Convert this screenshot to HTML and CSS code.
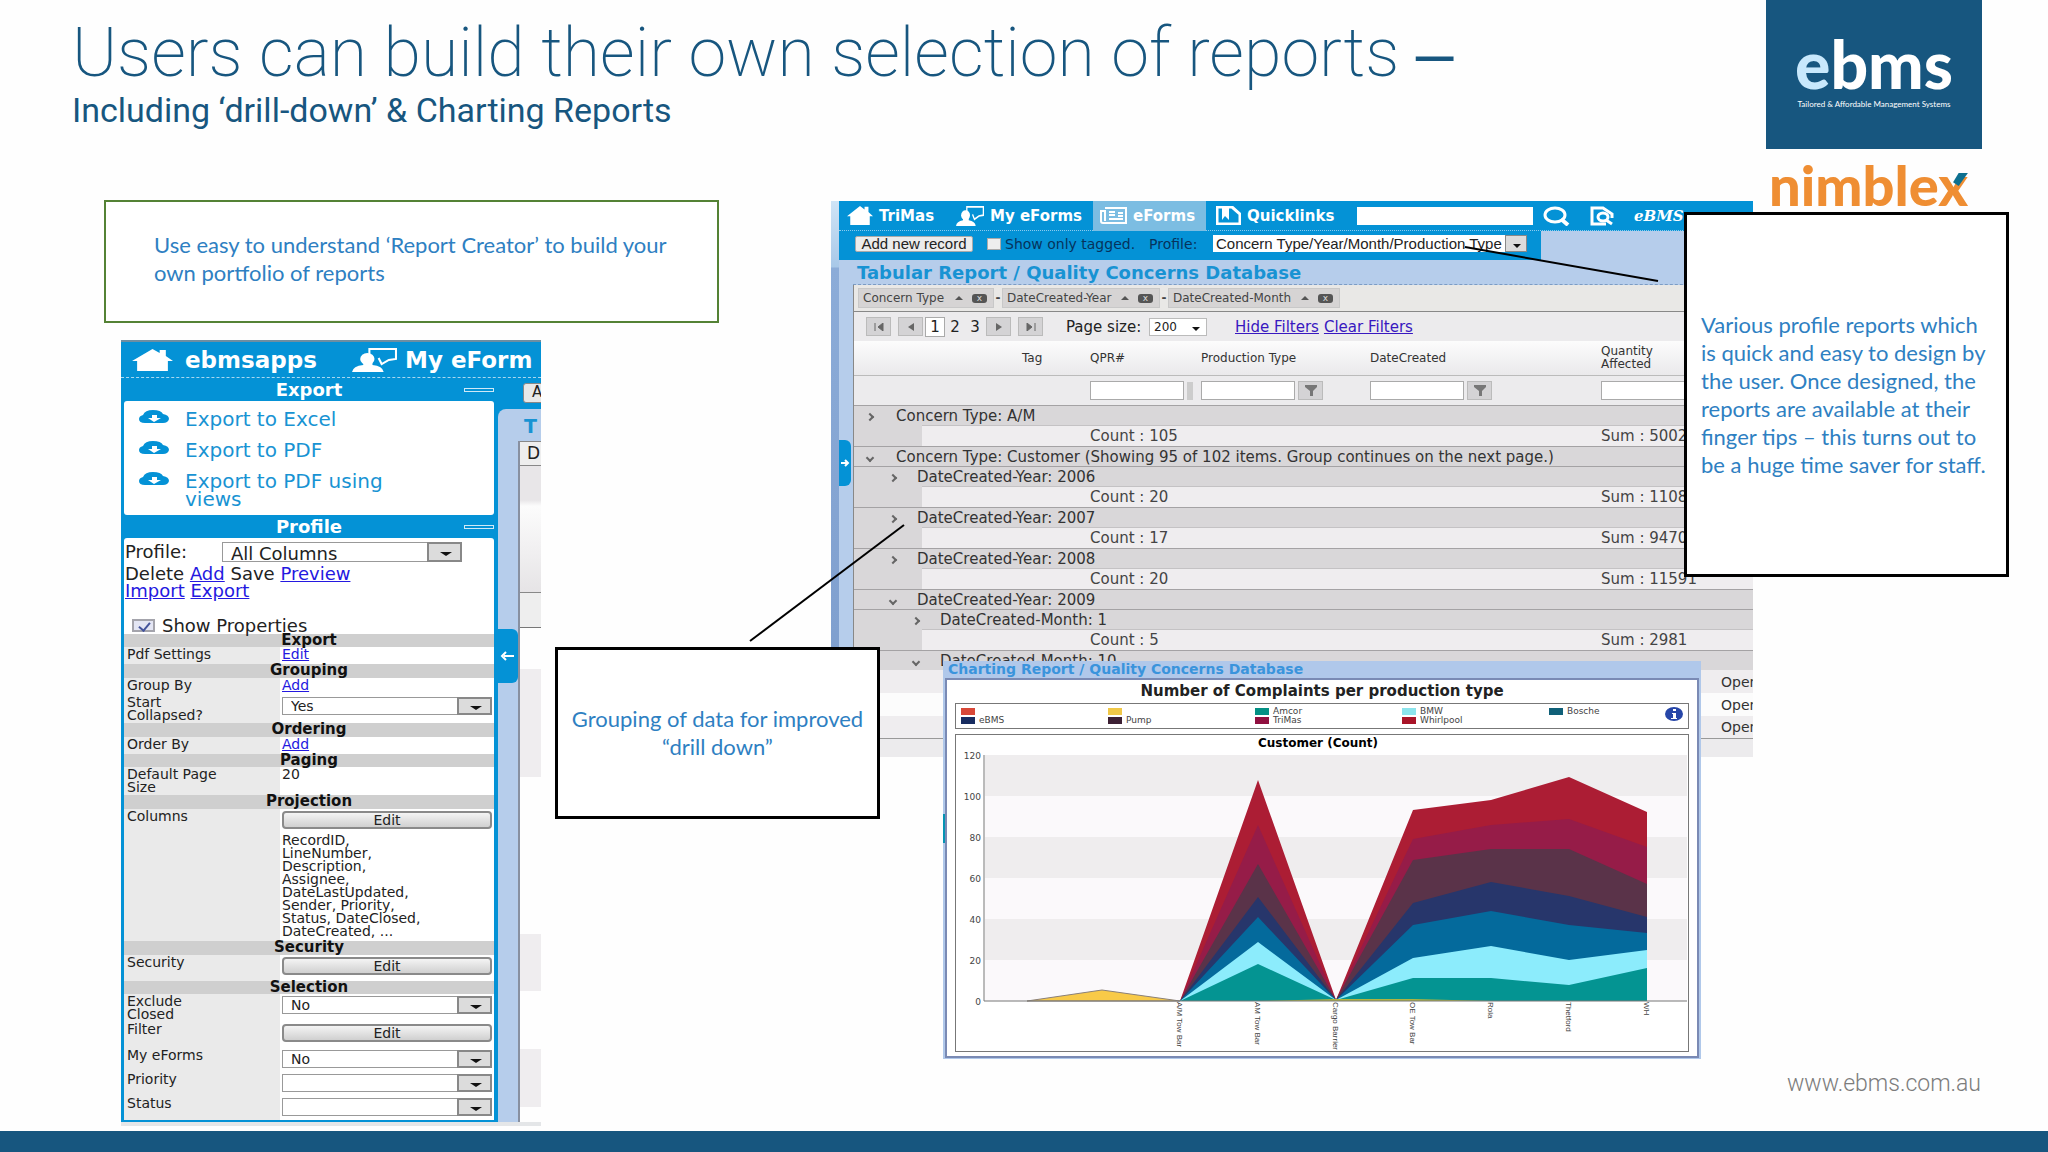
FILE: index.html
```html
<!DOCTYPE html>
<html lang="en">
<head>
    <meta charset="UTF-8">
    <meta name="viewport" content="width=device-width, initial-scale=1.0">
    <title>ebms - Report selection</title>
    <link rel="stylesheet" href="styles.css">
</head>
<body>
    <!-- shared icons -->
    <svg class="defs" width="0" height="0">
        <symbol id="home" viewBox="0 0 40 22" preserveAspectRatio="none">
            <path d="M20 0 L27 4 V1 H33 V7 L40 12 H35 V22 H5 V12 H0 Z" fill="#fff"/>
        </symbol>
        <symbol id="user" viewBox="0 0 44 24" preserveAspectRatio="none">
            <path d="M17 6 V1 H43 V11 L36 12 L29 16 L26 10" fill="none" stroke="#fff" stroke-width="2"/>
            <ellipse cx="15" cy="11" rx="7" ry="6" fill="#fff"/>
            <path d="M0 24 Q1 18 11 17 V14 H20 V17 Q30 18 31 24 Z" fill="#fff"/>
        </symbol>
        <symbol id="cloud" viewBox="0 0 30 13" preserveAspectRatio="none">
            <path d="M6 13 Q0 13 0 9 Q0 6 4 5 Q6 0 14 0 Q22 0 24 4 Q30 5 30 9 Q29 13 24 13 Z" fill="#0492d6"/>
            <path d="M13 5 H18 V8 H22 L15 12 L9 8 H13 Z" fill="#fff"/>
        </symbol>
        <symbol id="funnel" viewBox="0 0 12 11">
            <path d="M0 0 H12 V2 L8 6 V11 H5 V6 L0 2 Z" fill="#777"/>
        </symbol>
    </svg>

    <header class="slide-header">
        <div>
            <h1>Users can build their own selection of reports <span class="dash">–</span></h1>
            <p class="subtitle">Including ‘drill-down’ &amp; Charting Reports</p>
        </div>
        <div class="brand">
            <div class="ebms">
                <div class="ebms-name"><span>e</span>bms</div>
                <div class="ebms-tag">Tailored &amp; Affordable Management Systems</div>
            </div>
            <div class="nimblex">nimblex
                <svg width="15" height="13" viewBox="0 0 16 14"><path d="M6 0 H16 L6 14 L0 10 Z" fill="#0d7090"/></svg>
            </div>
        </div>
    </header>

    <main class="canvas">
        <div class="note note-creator">
            <p>Use easy to understand ‘Report Creator’ to build your own portfolio of reports</p>
        </div>

        <!-- report creator -->
        <section class="window creator">
            <nav class="creator-nav">
                <svg width="41" height="22"><use href="#home"/></svg>
                <a href="#">ebmsapps</a>
                <svg width="45" height="24"><use href="#user"/></svg>
                <a href="#">My eForm</a>
            </nav>
            <div class="creator-body">
                <div class="sidebar">
                    <h2>Export <i class="collapse"></i></h2>
                    <ul class="card exports">
                        <li><svg width="30" height="13"><use href="#cloud"/></svg><a href="#">Export to Excel</a></li>
                        <li><svg width="30" height="13"><use href="#cloud"/></svg><a href="#">Export to PDF</a></li>
                        <li><svg width="30" height="13"><use href="#cloud"/></svg><a href="#">Export to PDF using<br>views</a></li>
                    </ul>
                    <h2>Profile <i class="collapse"></i></h2>
                    <div class="card">
                        <div class="profile-row">
                            <label for="profile">Profile:</label>
                            <span class="pick"><select id="profile"><option>All Columns</option></select></span>
                        </div>
                        <div class="actions">Delete <a href="#">Add</a> Save <a href="#">Preview</a><br><a href="#">Import</a> <a href="#">Export</a></div>
                        <label class="show-props"><input type="checkbox" checked> Show Properties</label>
                        <table class="props">
                            <colgroup><col class="p-label"><col></colgroup>
                            <tr class="r13"><th colspan="2">Export</th></tr>
                            <tr class="r17"><td>Pdf Settings</td><td><a href="#">Edit</a></td></tr>
                            <tr class="r14"><th colspan="2">Grouping</th></tr>
                            <tr class="r17"><td>Group By</td><td><a href="#">Add</a></td></tr>
                            <tr class="r28"><td>Start<br>Collapsed?</td><td><span class="pick"><select aria-label="Start Collapsed?"><option>Yes</option></select></span></td></tr>
                            <tr class="r14"><th colspan="2">Ordering</th></tr>
                            <tr class="r17"><td>Order By</td><td><a href="#">Add</a></td></tr>
                            <tr class="r13"><th colspan="2">Paging</th></tr>
                            <tr class="r28"><td>Default Page<br>Size</td><td>20</td></tr>
                            <tr class="r14"><th colspan="2">Projection</th></tr>
                            <tr class="r132"><td>Columns</td><td><button>Edit</button>RecordID,<br>LineNumber,<br>Description,<br>Assignee,<br>DateLastUpdated,<br>Sender, Priority,<br>Status, DateClosed,<br>DateCreated, ...</td></tr>
                            <tr class="r14"><th colspan="2">Security</th></tr>
                            <tr class="r26"><td>Security</td><td><button>Edit</button></td></tr>
                            <tr class="r13"><th colspan="2">Selection</th></tr>
                            <tr class="r28"><td>Exclude<br>Closed</td><td><span class="pick"><select aria-label="Exclude Closed"><option>No</option></select></span></td></tr>
                            <tr class="r26"><td>Filter</td><td><button>Edit</button></td></tr>
                            <tr class="r24"><td>My eForms</td><td><span class="pick"><select aria-label="My eForms"><option>No</option></select></span></td></tr>
                            <tr class="r24"><td>Priority</td><td><span class="pick"><select aria-label="Priority"><option></option></select></span></td></tr>
                            <tr class="r24"><td>Status</td><td><span class="pick"><select aria-label="Status"><option></option></select></span></td></tr>
                        </table>
                    </div>
                </div>
                <div class="behind">
                    <div class="behind-bar"><button>A</button></div>
                    <div class="behind-page">
                        <div class="behind-title">T</div>
                        <div class="behind-grid">
                            <div class="behind-head">D</div>
                            <div class="behind-filter"></div>
                            <div class="behind-row"></div>
                            <div class="behind-list"></div>
                        </div>
                    </div>
                </div>
            </div>
            <div class="handle">
                <svg width="14" height="10" viewBox="0 0 14 10"><path d="M14 5 H4 M6 1 L2 5 L6 9" fill="none" stroke="#fff" stroke-width="2"/></svg>
            </div>
        </section>

        <!-- tabular report -->
        <section class="window tabular">
            <div class="edge"></div>
            <div class="tab-main">
                <nav class="tab-nav">
                    <a class="n-home" href="#"><svg width="26" height="19"><use href="#home"/></svg>TriMas</a>
                    <a class="n-forms" href="#"><svg width="28" height="20"><use href="#user"/></svg>My eForms</a>
                    <a class="n-active" href="#"><svg width="27" height="17" viewBox="0 0 27 17"><path d="M5 1 H26 V16 H3 Q1 16 1 14 V4 H5 V14" fill="none" stroke="#fff" stroke-width="2"/><path d="M9 5 H15 M9 8 H15 M9 12 H23 M18 6 H23 M18 9 H23" stroke="#fff" stroke-width="2"/></svg>eForms</a>
                    <a class="n-quick" href="#"><svg width="25" height="19" viewBox="0 0 25 19"><path d="M1 1 H16 L24 8 V18 H1 Z" fill="none" stroke="#fff" stroke-width="3"/><path d="M6 2 H13 V14 L9 10 L6 14 Z" fill="#fff"/></svg>Quicklinks</a>
                    <input type="text" aria-label="Search">
                    <svg class="n-search" width="27" height="20" viewBox="0 0 27 20"><ellipse cx="12" cy="9" rx="10" ry="7" fill="none" stroke="#fff" stroke-width="3"/><path d="M18 13 L25 19" stroke="#fff" stroke-width="4"/></svg>
                    <svg class="n-doc" width="24" height="20" viewBox="0 0 24 20"><path d="M16 18 H2 V2 H13 L22 8 V12" fill="none" stroke="#fff" stroke-width="3"/><ellipse cx="13" cy="11" rx="5" ry="4" fill="none" stroke="#fff" stroke-width="3"/><path d="M16 14 L22 18" stroke="#fff" stroke-width="3"/></svg>
                    <span class="n-brand">eBMS v</span>
                </nav>
                <div class="toolbar">
                    <button>Add new record</button>
                    <label class="tagged"><input type="checkbox"> Show only tagged.</label>
                    <label class="tagged" for="tabProfile">Profile:</label>
                    <span class="pick"><select id="tabProfile"><option>Concern Type/Year/Month/Production Type</option></select></span>
                </div>
                <div class="tab-page">
                    <h2>Tabular Report / Quality Concerns Database</h2>
                    <div class="grid">
                        <div class="chips">
                            <span class="chip chip-a">Concern Type <i class="up"></i><i class="x">x</i></span><b>-</b>
                            <span class="chip chip-b">DateCreated-Year <i class="up"></i><i class="x">x</i></span><b>-</b>
                            <span class="chip chip-c">DateCreated-Month <i class="up"></i><i class="x">x</i></span>
                        </div>
                        <div class="pager">
                            <button aria-label="First"><svg width="10" height="8"><path d="M1 0 V8 M9 0 L4 4 L9 8 Z" fill="#666" stroke="#666"/></svg></button>
                            <button class="prev" aria-label="Previous"><svg width="10" height="8"><path d="M8 0 L2 4 L8 8 Z" fill="#666"/></svg></button>
                            <span class="page current">1</span><span class="page">2</span><span class="page">3</span>
                            <button aria-label="Next"><svg width="10" height="8"><path d="M2 0 L8 4 L2 8 Z" fill="#666"/></svg></button>
                            <button aria-label="Last"><svg width="10" height="8"><path d="M9 0 V8 M1 0 L6 4 L1 8 Z" fill="#666" stroke="#666"/></svg></button>
                            <label for="pageSize">Page size:</label>
                            <span class="pick"><select id="pageSize"><option>200</option></select></span>
                            <a href="#">Hide Filters</a>
                            <a class="clear" href="#">Clear Filters</a>
                        </div>
                        <table class="records">
                            <colgroup><col class="c-in"><col class="c-tag"><col class="c-qpr"><col class="c-prod"><col class="c-date"><col class="c-qty"><col></colgroup>
                            <tr class="heads"><th></th><th class="tag">Tag</th><th>QPR#</th><th>Production Type</th><th>DateCreated</th><th>Quantity<br>Affected</th><th></th></tr>
                            <tr class="filters">
                                <td></td><td></td>
                                <td><input type="text" aria-label="QPR#"><i class="stub"></i></td>
                                <td><input type="text" aria-label="Production Type"><button aria-label="Filter"><svg width="12" height="11"><use href="#funnel"/></svg></button></td>
                                <td><input type="text" aria-label="DateCreated"><button aria-label="Filter"><svg width="12" height="11"><use href="#funnel"/></svg></button></td>
                                <td><input type="text" aria-label="Quantity"></td><td></td>
                            </tr>
                            <tr class="group l1"><td colspan="7"><i class="shut"></i>Concern Type: A/M</td></tr>
                            <tr class="count"><td></td><td></td><td colspan="3">Count : 105</td><td colspan="2">Sum : 5002</td></tr>
                            <tr class="group l1"><td colspan="7"><i class="open"></i>Concern Type: Customer (Showing 95 of 102 items. Group continues on the next page.)</td></tr>
                            <tr class="group l2"><td colspan="7"><i class="shut"></i>DateCreated-Year: 2006</td></tr>
                            <tr class="count"><td></td><td></td><td colspan="3">Count : 20</td><td colspan="2">Sum : 1108</td></tr>
                            <tr class="group l2"><td colspan="7"><i class="shut"></i>DateCreated-Year: 2007</td></tr>
                            <tr class="count"><td></td><td></td><td colspan="3">Count : 17</td><td colspan="2">Sum : 9470</td></tr>
                            <tr class="group l2"><td colspan="7"><i class="shut"></i>DateCreated-Year: 2008</td></tr>
                            <tr class="count"><td></td><td></td><td colspan="3">Count : 20</td><td colspan="2">Sum : 11591</td></tr>
                            <tr class="group l2"><td colspan="7"><i class="open"></i>DateCreated-Year: 2009</td></tr>
                            <tr class="group l3"><td colspan="7"><i class="shut"></i>DateCreated-Month: 1</td></tr>
                            <tr class="count"><td></td><td></td><td colspan="3">Count : 5</td><td colspan="2">Sum : 2981</td></tr>
                            <tr class="group l3"><td colspan="7"><i class="open"></i>DateCreated-Month: 10</td></tr>
                            <tr class="item"><td></td><td colspan="5"></td><td>Open</td></tr>
                            <tr class="item alt"><td></td><td colspan="5"></td><td>Open</td></tr>
                            <tr class="item last"><td></td><td colspan="5"></td><td>Open</td></tr>
                        </table>
                    </div>
                </div>
            </div>
            <div class="handle">
                <svg width="9" height="8" viewBox="0 0 9 8"><path d="M0 4 H6 M4 1 L7 4 L4 7" fill="none" stroke="#fff" stroke-width="2"/></svg>
            </div>
        </section>

        <!-- charting report -->
        <section class="window charting">
            <h2>Charting Report / Quality Concerns Database</h2>
            <div class="chart-page">
                <h3>Number of Complaints per production type</h3>
                <div class="legend">
                    <ul>
                        <li class="k-coral"></li><li class="k-yellow"></li><li class="k-teal">Amcor</li><li class="k-cyan">BMW</li><li class="k-blue">Bosche</li>
                        <li class="k-navy">eBMS</li><li class="k-plum">Pump</li><li class="k-crimson">TriMas</li><li class="k-red">Whirlpool</li>
                    </ul>
                    <svg width="18" height="14" viewBox="0 0 18 14"><ellipse cx="9" cy="7" rx="9" ry="7" fill="#2746a8"/><path d="M8 2 H11 V4 H8 Z M7 6 H11 V11 H12 V12 H6 V11 H8 V7 H7 Z" fill="#fff"/></svg>
                </div>
                <div class="plot">
                    <svg viewBox="0 0 732 316">
                        <text class="plot-title" x="362" y="12">Customer (Count)</text>
                        <path d="M29 20 H731 V61 H29 Z M29 102 H731 V143 H29 Z M29 184 H731 V225 H29 Z" fill="#efedee"/>
                        <path d="M29 61 H731 V102 H29 Z M29 143 H731 V184 H29 Z M29 225 H731 V266 H29 Z" fill="#fbf9fb"/>
                        <path d="M71 266 L146 255 L224 266 Z" fill="#f8ca48" stroke="#8a8078"/>
                        <path d="M224 266 L302 45 L380 265 L457 75 L535 65 L613 42 L691 77 V266 Z" fill="#ac1d34"/>
                        <path d="M224 266 L302 90 L380 265 L457 104 L535 90 L613 84 L691 112 V266 Z" fill="#961c48"/>
                        <path d="M224 266 L302 129 L380 265 L457 125 L535 114 L613 114 L691 149 V266 Z" fill="#5a3349"/>
                        <path d="M224 266 L302 162 L380 265 L457 168 L535 147 L613 161 L691 182 V266 Z" fill="#27366b"/>
                        <path d="M224 266 L302 182 L380 265 L457 190 L535 176 L613 190 L691 198 V266 Z" fill="#046a9c"/>
                        <path d="M224 266 L302 207 L380 265 L457 223 L535 211 L613 225 L691 215 V266 Z" fill="#8cecfc"/>
                        <path d="M224 266 L302 229 L380 265 L457 243 L535 243 L613 250 L691 233 V266 Z" fill="#049492"/>
                        <path d="M302 266 L380 264 L457 264 L535 266 Z" fill="#b0b440"/>
                        <path d="M28 20 V266 H731" fill="none" stroke="#777" stroke-width="1"/>
                        <g class="ticks">
                            <text x="25" y="24">120</text><text x="25" y="65">100</text><text x="25" y="106">80</text><text x="25" y="147">60</text><text x="25" y="188">40</text><text x="25" y="229">20</text><text x="25" y="270">0</text>
                        </g>
                        <g class="cats">
                            <text transform="translate(221 267) rotate(90)">A/M Tow Bar</text>
                            <text transform="translate(299 267) rotate(90)">AM Tow Bar</text>
                            <text transform="translate(377 267) rotate(90)">Cargo Barrier</text>
                            <text transform="translate(454 267) rotate(90)">OE Tow Bar</text>
                            <text transform="translate(532 267) rotate(90)">Rola</text>
                            <text transform="translate(610 267) rotate(90)">Thetford</text>
                            <text transform="translate(688 267) rotate(90)">WH</text>
                        </g>
                    </svg>
                </div>
            </div>
        </section>

        <div class="note note-group">
            <p>Grouping of data for improved “drill down”</p>
        </div>
        <div class="note note-profile">
            <p>Various profile reports which is quick and easy to design by the user. Once designed, the reports are available at their finger tips – this turns out to be a huge time saver for staff.</p>
        </div>

        <svg class="pointer pointer-group" width="156" height="118"><path d="M1 117 L155 1" stroke="#000" stroke-width="2"/></svg>
        <svg class="pointer pointer-profile" width="196" height="38"><path d="M1 2 L194 36" stroke="#000" stroke-width="2"/></svg>

        <a class="site" href="#">www.ebms.com.au</a>
    </main>

    <footer class="slide-footer"></footer>
</body>
</html>
```

FILE: styles.css
```css
* {
    box-sizing: border-box;
}
body {
    margin: 0;
    min-height: 100vh;
    display: flex;
    flex-direction: column;
    position: relative;
    background-color: #fefefe;
    color: #222;
    font-family: "DejaVu Sans", sans-serif;
    overflow: hidden;
}
h1, h2, h3, p, ul {
    margin: 0;
    padding: 0;
}
ul {
    list-style: none;
}
button, input, select {
    font-family: inherit;
    color: inherit;
    margin: 0;
    padding: 0;
}
svg {
    display: block;
    flex: none;
}
.defs {
    position: absolute;
}

/* header */
.slide-header {
    display: flex;
    justify-content: space-between;
    height: 200px;
    padding: 0 66px 0 72px;
    color: #17567f;
    font-family: Roboto, sans-serif;
}
h1 {
    padding-top: 12px;
    font-size: 68px;
    line-height: 80px;
    font-weight: 200;
    white-space: nowrap;
}
.dash {
    font-family: "Liberation Sans", sans-serif;
    font-weight: 400;
}
.subtitle {
    font-size: 34px;
    line-height: 34px;
}
.brand {
    width: 216px;
    font-family: Lato, sans-serif;
}
.ebms {
    height: 149px;
    padding-top: 30px;
    background-color: #17567f;
    color: #fff;
    text-align: center;
}
.ebms-name {
    font-size: 66px;
    line-height: 68px;
    font-weight: 900;
}
.ebms-name span {
    color: #c8e8fc;
}
.ebms-tag {
    font-size: 8px;
    line-height: 12px;
}
.nimblex {
    position: relative;
    padding-left: 3px;
    color: #ef8e33;
    font-size: 56px;
    line-height: 72px;
    font-weight: 900;
}
.nimblex svg {
    position: absolute;
    right: 14px;
    top: 24px;
}

/* free canvas */
.canvas {
    flex: 1;
    position: relative;
}
.window {
    position: absolute;
    overflow: hidden;
}
.note {
    position: absolute;
    display: flex;
    align-items: center;
    background-color: #fff;
    border: 3px solid #000;
    color: #2e80c2;
    font-family: Lato, sans-serif;
    font-size: 22px;
    line-height: 28px;
}
.note-creator {
    left: 104px;
    top: 0;
    width: 615px;
    height: 123px;
    padding: 0 48px 6px;
    border: 2px solid #548235;
}
.note-group {
    left: 555px;
    top: 447px;
    width: 325px;
    height: 172px;
    padding: 0 8px;
    text-align: center;
}
.note-profile {
    right: 39px;
    top: 12px;
    width: 325px;
    height: 365px;
    padding: 0 14px;
}
.pointer {
    position: absolute;
}
.pointer-group {
    left: 749px;
    top: 324px;
}
.pointer-profile {
    left: 1464px;
    top: 45px;
}
.site {
    position: absolute;
    right: 67px;
    bottom: 33px;
    color: #7c7c7c;
    font: 300 23px/28px Roboto, sans-serif;
    text-decoration: none;
}
.slide-footer {
    height: 21px;
    background-color: #17567f;
}

/* shared controls */
.pick {
    position: relative;
    display: inline-block;
}
.pick select {
    display: block;
    width: 100%;
    height: 100%;
    padding-left: 8px;
    appearance: none;
    border: 1px solid #999;
    border-radius: 0;
    background-color: #fff;
    font-size: inherit;
}
.pick::before {
    content: "";
    position: absolute;
    right: 0;
    top: 0;
    bottom: 0;
    width: 31px;
    border: 2px solid #888;
    background-color: #dcdcdc;
    pointer-events: none;
}
.pick::after {
    content: "";
    position: absolute;
    right: 10px;
    top: 50%;
    border: 6px solid transparent;
    border-top: 4px solid #111;
    border-bottom: 0;
    pointer-events: none;
}
.handle {
    position: absolute;
    display: flex;
    align-items: center;
    justify-content: center;
    background-color: #0492d6;
    border-radius: 0 6px 6px 0;
}

/* report creator */
.creator {
    left: 121px;
    top: 140px;
    width: 420px;
    height: 786px;
    border-top: 2px solid #6d8ea2;
    border-bottom: 4px solid #e4e6e8;
}
.creator-nav {
    display: flex;
    align-items: center;
    height: 36px;
    padding-left: 11px;
    border-bottom: 1px dashed #a8d8f0;
    background-color: #0492d6;
    white-space: nowrap;
}
.creator-nav a {
    flex: none;
    width: 179px;
    padding-left: 12px;
    color: #fff;
    font-size: 23px;
    line-height: 34px;
    font-weight: bold;
    text-decoration: none;
}
.creator-nav svg + a + svg + a {
    width: 150px;
    padding-left: 8px;
}
.creator-body {
    display: flex;
    height: 744px;
    background-color: #0492d6;
}
.sidebar {
    flex: none;
    width: 377px;
    padding: 0 4px 0 3px;
}
.sidebar h2 {
    position: relative;
    height: 23px;
    color: #fff;
    font-size: 18px;
    line-height: 23px;
    text-align: center;
}
.collapse {
    position: absolute;
    right: 0;
    top: 10px;
    width: 30px;
    height: 4px;
    border: 1px solid #cfe9f7;
}
.card {
    border-radius: 3px;
    background-color: #fff;
}
.exports {
    height: 114px;
    padding: 8px 0 0 15px;
}
.exports li {
    display: flex;
    gap: 16px;
    height: 31px;
    padding-top: 1px;
}
.exports a {
    color: #1893d3;
    font-size: 20px;
    line-height: 18px;
    text-decoration: none;
}
.profile-row {
    display: flex;
    align-items: center;
    padding: 4px 0 2px 1px;
    font-size: 18px;
    line-height: 20px;
}
.profile-row label {
    width: 97px;
}
.profile-row .pick {
    width: 240px;
    height: 20px;
}
.actions {
    height: 52px;
    padding: 1px 0 0 1px;
    font-size: 18px;
    line-height: 17px;
}
.card a[href] {
    text-underline-offset: 1px;
}
.actions a, .props a {
    color: #2418e0;
}
.show-props {
    display: flex;
    align-items: center;
    gap: 7px;
    height: 18px;
    padding-left: 8px;
    font-size: 18px;
}
.show-props input {
    width: 23px;
    height: 13px;
    appearance: none;
    border: 2px solid #a4a4ac;
    background-color: #e4e6f4;
    position: relative;
}
.show-props input:checked::after {
    content: "";
    position: absolute;
    left: 7px;
    top: -1px;
    width: 5px;
    height: 9px;
    border: solid #44549c;
    border-width: 0 2px 2px 0;
    transform: rotate(40deg);
}
.props {
    width: 100%;
    table-layout: fixed;
    border-spacing: 0;
    font-size: 14px;
    line-height: 13px;
}
.props th, .props td {
    padding: 0;
    vertical-align: top;
    white-space: nowrap;
}
.props th {
    background-color: #cfcfcf;
    color: #111;
    font-size: 15px;
    line-height: 13px;
}
.p-label {
    width: 156px;
}
.props td:first-child {
    padding: 1px 0 0 3px;
    background-color: #eaeaea;
}
.props td:last-child {
    padding: 1px 2px 0 2px;
    background-color: #fff;
}
.props .pick, .props button {
    display: block;
    width: 100%;
    height: 18px;
    margin-top: 1px;
    font-size: 14px;
}
.props button {
    margin: 1px 0 5px 0;
    border: 2px solid #8a8a8a;
    border-radius: 4px;
    background: linear-gradient(#f4f4f4, #d0d0d0);
    line-height: 13px;
}
.r13 { height: 13px; }
.r14 { height: 14px; }
.r17 { height: 17px; }
.r24 { height: 24px; }
.r26 { height: 26px; }
.r28 { height: 28px; }
.r132 { height: 132px; }
.behind {
    flex: 1;
    min-width: 0;
    overflow: hidden;
    display: flex;
    flex-direction: column;
}
.behind-bar {
    height: 33px;
    padding: 4px 0 0 25px;
}
.behind-bar button {
    width: 60px;
    height: 20px;
    padding-left: 8px;
    border: 1px solid #888;
    border-radius: 3px;
    background-color: #e8e8e8;
    font-size: 15px;
    line-height: 15px;
    text-align: left;
}
.behind-page {
    flex: 1;
    display: flex;
    flex-direction: column;
    padding-left: 20px;
    border-radius: 8px 0 0 0;
    background-color: #b6cdeb;
}
.behind-title {
    height: 32px;
    padding: 7px 0 0 6px;
    color: #1893d3;
    font-size: 19px;
    line-height: 20px;
    font-weight: bold;
}
.behind-grid {
    flex: 1;
    border-left: 2px solid #8890a0;
    background-color: #fefefe;
}
.behind-head {
    height: 25px;
    padding-left: 7px;
    border: solid #888;
    border-width: 1px 0;
    background-color: #eee;
    font-size: 17px;
    line-height: 23px;
}
.behind-filter {
    height: 127px;
    border-bottom: 1px solid #888;
    background: linear-gradient(#e8e6e8 34px, #fcfcfc 40px, #e6e4e6);
}
.behind-row {
    height: 35px;
    border-bottom: 1px solid #777;
    background-color: #eee;
}
.behind-list {
    height: 494px;
    background: linear-gradient(#fefefe 41px, #efedef 41px, #efedef 149px, #fefefe 149px, #fefefe 306px, #efedef 306px, #efedef 363px, #fefefe 363px, #fefefe 421px, #efedef 421px, #efedef 479px, #fefefe 479px);
}
.creator .handle {
    left: 374px;
    top: 287px;
    width: 23px;
    height: 54px;
}

/* tabular report */
.tabular {
    left: 831px;
    top: 1px;
    width: 922px;
    height: 556px;
    display: flex;
    background-color: #0492d6;
}
.edge {
    width: 8px;
    background: linear-gradient(#cfe4f6, #a8c8e8 66px, #8cacd8 67px, #7c9ccc);
}
.tab-main {
    flex: 1;
    min-width: 0;
    display: flex;
    flex-direction: column;
    background-color: #b6cdeb;
}
.tab-nav {
    display: flex;
    align-items: center;
    height: 30px;
    padding-left: 8px;
    background-color: #0492d6;
    border-bottom: 1px dotted #8ccbee;
    color: #fff;
    white-space: nowrap;
}
.tab-nav a {
    display: flex;
    align-items: center;
    gap: 6px;
    height: 30px;
    color: #fff;
    font-size: 15px;
    font-weight: bold;
    text-decoration: none;
}
.n-home {
    width: 109px;
}
.n-forms {
    width: 137px;
}
.tab-nav .n-active {
    width: 113px;
    padding-left: 7px;
    background-color: #7cbde2;
}
.n-quick {
    width: 151px;
    padding-left: 10px;
}
.tab-nav input {
    width: 176px;
    height: 18px;
    border: 0;
    background-color: #fff;
}
.n-search {
    margin-left: 10px;
}
.n-doc {
    margin-left: 20px;
}
.n-brand {
    margin-left: 20px;
    font: italic bold 15px "DejaVu Serif", serif;
}
.toolbar {
    display: flex;
    align-items: center;
    width: 702px;
    height: 29px;
    padding: 0 14px 4px 16px;
    background-color: #0492d6;
    color: #06325c;
    font-size: 14px;
    white-space: nowrap;
}
.toolbar button {
    width: 118px;
    height: 16px;
    border: 1px solid #aaa;
    border-radius: 2px;
    background-color: #ececec;
    color: #222;
    font: 15px/14px "Liberation Sans", sans-serif;
}
.tagged {
    display: flex;
    align-items: center;
    gap: 4px;
    margin-left: 14px;
}
.tagged input {
    width: 14px;
    height: 12px;
    appearance: none;
    border: 1px solid #aaa;
    background-color: #eee;
}
.toolbar .pick {
    width: 314px;
    height: 17px;
    margin-left: auto;
    color: #222;
    font: 15px "Liberation Sans", sans-serif;
}
.toolbar .pick select {
    padding-left: 3px;
    border: 0;
    font-family: inherit;
}
.toolbar .pick::before {
    width: 20px;
    border-width: 1px;
}
.toolbar .pick::after {
    right: 6px;
    border-width: 4px 4px 0;
}
.tab-page {
    flex: 1;
    display: flex;
    flex-direction: column;
    padding-left: 14px;
    border-radius: 6px 0 0 0;
}
.tab-page h2 {
    height: 25px;
    padding-left: 4px;
    border-bottom: 1px dashed #7c9cc4;
    color: #1893d3;
    font-size: 18px;
    line-height: 26px;
}
.grid {
    flex: 1;
    border-left: 1px solid #888;
    background-color: #ecebed;
}
.chips {
    display: flex;
    align-items: center;
    height: 27px;
    padding-left: 4px;
    border-bottom: 1px solid #888;
    background-color: #e9e8e6;
    font-size: 12px;
    color: #444;
}
.chips b {
    width: 8px;
    text-align: center;
}
.chip {
    display: flex;
    align-items: center;
    height: 20px;
    padding: 0 6px 0 4px;
    border: 1px solid #c8c8c8;
    background-color: #d6d4d4;
    white-space: nowrap;
}
.chip-a { width: 136px; }
.chip-b { width: 158px; }
.chip-c { width: 172px; }
.up {
    margin-left: auto;
    border: 4px solid transparent;
    border-bottom: 4px solid #555;
    border-top: 0;
}
.x {
    width: 15px;
    height: 9px;
    margin-left: 9px;
    border-radius: 3px;
    background-color: #555;
    color: #ddd;
    font: 9px/8px "DejaVu Sans", sans-serif;
    text-align: center;
}
.pager {
    display: flex;
    align-items: center;
    height: 29px;
    padding: 0 0 0 12px;
    font-size: 15px;
}
.pager button {
    display: flex;
    align-items: center;
    justify-content: center;
    width: 25px;
    height: 19px;
    margin-right: 7px;
    border: 1px solid #bbb;
    background-color: #d4d3d5;
}
.pager .prev {
    margin-right: 2px;
}
.page {
    width: 20px;
    line-height: 18px;
    text-align: center;
}
.current {
    border: 1px solid #aaa;
    background-color: #fff;
}
.page + button {
    margin-left: 1px;
}
.pager label {
    width: 83px;
    margin-left: 16px;
}
.pager .pick {
    width: 58px;
    height: 18px;
    margin-right: 28px;
    font-size: 12px;
}
.pager .pick select {
    padding-left: 4px;
    border-color: #bbb;
}
.pager .pick::before {
    display: none;
}
.pager .pick::after {
    right: 7px;
    border-width: 4px 4px 0;
}
.pager a {
    color: #3818c0;
    font-size: 15px;
}
.pager .clear {
    margin-left: 5px;
}
.records {
    width: 100%;
    table-layout: fixed;
    border-spacing: 0;
    font-size: 15px;
    line-height: 16px;
    color: #333;
}
.records th, .records td {
    padding: 0 0 0 5px;
    text-align: left;
    white-space: nowrap;
}
.c-in { width: 68px; }
.c-tag { width: 163px; }
.c-qpr { width: 111px; }
.c-prod { width: 169px; }
.c-date { width: 231px; }
.c-qty { width: 121px; }
.heads {
    height: 34px;
    background: linear-gradient(#fcfcfc, #eae9eb);
}
.heads th {
    font-size: 12px;
    line-height: 13px;
    font-weight: normal;
}
.records .tag {
    padding-left: 100px;
}
.filters {
    height: 30px;
}
.filters td {
    border-top: 1px solid #bbb;
    font-size: 0;
}
.filters input {
    width: 94px;
    height: 19px;
    border: 1px solid #aaa;
    background-color: #fff;
    vertical-align: middle;
}
.filters button {
    display: inline-flex;
    align-items: center;
    justify-content: center;
    width: 25px;
    height: 19px;
    margin-left: 3px;
    border: 1px solid #bbb;
    background-color: #d4d3d5;
    vertical-align: middle;
}
.stub {
    display: inline-block;
    width: 6px;
    height: 18px;
    margin-left: 3px;
    background-color: #ccc;
    vertical-align: middle;
}
.group {
    height: 20px;
}
.group td {
    border-top: 1px solid #a4a2a4;
    background-color: #d9d7d9;
}
.records .l1 td {
    padding-left: 12px;
}
.records .l2 td {
    padding-left: 35px;
}
.records .l3 td {
    padding-left: 58px;
}
.group i {
    display: inline-block;
    width: 6px;
    height: 6px;
    margin: 0 21px 1px 1px;
    border: solid #666;
    border-width: 0 2px 2px 0;
    transform: rotate(-45deg);
}
.l1 i {
    margin-right: 23px;
}
.group .open {
    transform: rotate(45deg);
}
.count {
    height: 21px;
}
.count td {
    background-color: #efedef;
    border-top: 1px solid #c4c2c4;
    color: #444;
}
.count td:first-child {
    border: 0;
    background-color: #d9d7d9;
}
.item {
    height: 23px;
    background-color: #efedef;
}
.item td:last-child {
    padding-left: 4px;
    font-size: 14px;
}
.alt {
    background-color: #fcfcfc;
}
.last td {
    border-bottom: 1px solid #999;
}
.tabular .handle {
    left: 8px;
    top: 239px;
    width: 12px;
    height: 46px;
}

/* charting report */
.charting {
    left: 943px;
    top: 461px;
    width: 758px;
    height: 398px;
    padding: 0 2px 1px;
    background-color: #b0c8ea;
}
.charting::before {
    content: "";
    position: absolute;
    left: 0;
    top: 153px;
    width: 2px;
    height: 29px;
    background-color: #0494b4;
}
.charting h2 {
    height: 17px;
    padding-left: 3px;
    color: #3a94dc;
    font-size: 14px;
    line-height: 16px;
}
.chart-page {
    height: 380px;
    padding: 0 8px;
    border: 2px solid #7a8ab4;
    background-color: #fff;
}
.charting h3 {
    height: 23px;
    color: #222;
    font-size: 15px;
    line-height: 22px;
    text-align: center;
}
.legend {
    display: flex;
    justify-content: space-between;
    height: 26px;
    padding: 3px 5px 0 5px;
    border: 1px solid #777;
    font-size: 9px;
    color: #444;
}
.legend ul {
    display: grid;
    grid-template-columns: repeat(5, 147px);
    grid-auto-rows: 9px;
    flex: none;
    width: 690px;
}
.legend li {
    display: flex;
    align-items: center;
    gap: 4px;
    line-height: 9px;
}
.legend li::before {
    content: "";
    width: 14px;
    height: 7px;
    background-color: currentColor;
}
.k-coral::before { color: #d84838; }
.k-yellow::before { color: #f0c848; }
.k-teal::before { color: #049084; }
.k-cyan::before { color: #8ce4ec; }
.k-blue::before { color: #106078; }
.k-navy::before { color: #182c60; }
.k-plum::before { color: #3c2034; }
.k-crimson::before { color: #901040; }
.k-red::before { color: #a81428; }
.plot {
    margin-top: 5px;
    border: 1px solid #777;
}
.plot svg {
    width: 100%;
    font-family: "DejaVu Sans", sans-serif;
}
.plot-title {
    font-size: 12px;
    font-weight: bold;
    text-anchor: middle;
}
.ticks {
    font-size: 9px;
    text-anchor: end;
    fill: #444;
}
.cats {
    font-size: 8px;
    font-family: "Liberation Sans", sans-serif;
    fill: #444;
}
```
